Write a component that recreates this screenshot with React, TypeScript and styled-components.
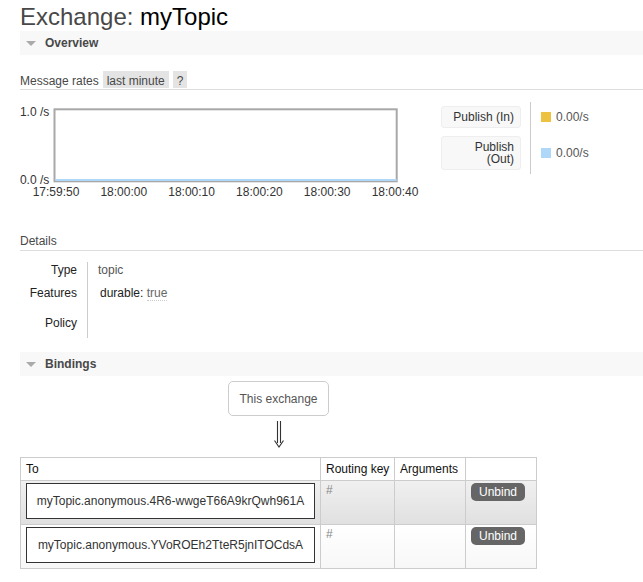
import React from 'react';
import styled, { createGlobalStyle } from 'styled-components';

const Global = createGlobalStyle`
  html, body { margin: 0; padding: 0; background: #fff; }
  body {
    font-family: "Liberation Sans", Arial, sans-serif;
    font-size: 12px;
    color: #484848;
    overflow: hidden;
  }
`;

const Main = styled.div`
  padding: 0 0 20px 20px;
`;

const Title = styled.h1`
  margin: 0;
  padding-top: 3px;
  height: 28px;
  line-height: 28px;
  font-size: 24px;
  font-weight: normal;
  color: #484848;
  white-space: nowrap;
  b { font-weight: normal; color: #000; }
`;

const SectionBar = styled.div<{ $mt: number }>`
  margin-top: ${p => p.$mt}px;
  height: 24px;
  background: #f8f8f8;
  display: flex;
  align-items: center;
  gap: 9px;
  padding-left: 6px;
  font-weight: bold;
  font-size: 12px;
  line-height: 14px;
  color: #484848;
`;

const Caret = styled.span`
  width: 0;
  height: 0;
  border-left: 5px solid transparent;
  border-right: 5px solid transparent;
  border-top: 5px solid #aaa;
`;

const SubHead = styled.div<{ $mt: number; $pb: number }>`
  margin-top: ${p => p.$mt}px;
  padding-bottom: ${p => p.$pb}px;
  font-size: 12px;
  line-height: 14px;
  color: #484848;
  border-bottom: 1px solid #ddd;
  white-space: nowrap;
`;

const Pill = styled.span<{ $ml: number }>`
  display: inline-block;
  margin-left: ${p => p.$ml}px;
  padding: 3px 4px 0;
  line-height: 14px;
  background: #e4e4e4;
  color: #484848;
`;

const ChartRow = styled.div`
  display: flex;
  align-items: flex-start;
  margin-top: 10px;
`;

const ChartSvg = styled.svg`
  display: block;
  margin-left: -5px;
  flex: none;
  font-family: "Liberation Sans", Arial, sans-serif;
  font-size: 12px;
`;

const Legend = styled.table`
  margin-left: 16px;
  margin-top: 2px;
  border-collapse: collapse;
  flex: none;
`;

const LegendTh = styled.th`
  padding: 4px 9px 4px 0;
  text-align: right;
  font-weight: normal;
  vertical-align: middle;
`;

const LegendLabel = styled.div`
  width: 66px;
  padding: 4px 6px;
  line-height: 12px;
  background: #f8f8f8;
  border: 1px solid #eee;
  border-radius: 3px;
  color: #333;
  text-align: right;
`;

const LegendTd = styled.td`
  border-left: 1px solid #ccc;
  padding: 0 0 0 10px;
  vertical-align: middle;
  color: #555;
  white-space: nowrap;
`;

const Swatch = styled.span<{ $c: string }>`
  display: inline-block;
  width: 10px;
  height: 10px;
  margin-right: 5px;
  vertical-align: -1px;
  background: ${p => p.$c};
`;

const Facts = styled.table`
  margin-top: 11px;
  border-collapse: collapse;
`;

const FactTh = styled.th<{ $pt: number; $pb: number }>`
  width: 57px;
  padding: ${p => p.$pt}px 10px ${p => p.$pb}px 0;
  text-align: right;
  font-weight: normal;
  color: #222;
  line-height: 14px;
  vertical-align: top;
  white-space: nowrap;
`;

const FactTd = styled.td<{ $pt: number; $pb: number }>`
  padding: ${p => p.$pt}px 0 ${p => p.$pb}px 10px;
  border-left: 1px solid #ccc;
  line-height: 14px;
  color: #555;
  vertical-align: top;
  white-space: nowrap;
`;

const FeatureKey = styled.span`
  color: #222;
  margin-left: 2px;
`;

const FeatureVal = styled.span`
  color: #666;
  border-bottom: 1px dotted #ccc;
`;

const BindingsWrap = styled.div`
  display: inline-block;
  margin-top: 5px;
  text-align: center;
`;

const ExchangeBox = styled.div`
  display: inline-block;
  padding: 10px 10px 9px;
  border: 1px solid #ccc;
  border-radius: 5px;
  line-height: 14px;
  color: #555;
`;

const ArrowSlot = styled.div`
  height: 41px;
  display: flex;
  justify-content: center;
  align-items: flex-start;
  padding-top: 5px;
  box-sizing: border-box;
`;

const BindTable = styled.table`
  border-collapse: collapse;
  table-layout: fixed;
  width: 517px;
  text-align: left;
`;

const HeadCell = styled.th`
  padding: 4px 5px;
  line-height: 14px;
  font-weight: normal;
  color: #111;
  border: 1px solid #ccc;
  background: #fff;
  white-space: nowrap;
`;

const BindRow = styled.tr<{ $alt: boolean }>`
  background: ${p =>
    p.$alt
      ? 'linear-gradient(#f0f0f0, #e0e0e0)'
      : 'linear-gradient(#ffffff, #f7f7f7)'};
`;

const Cell = styled.td<{ $muted?: boolean }>`
  padding: 2px 5px 5px;
  border: 1px solid #ccc;
  vertical-align: top;
  line-height: 14px;
  color: ${p => (p.$muted ? '#888' : '#333')};
`;

const QueueBox = styled.div`
  height: 34px;
  display: flex;
  align-items: center;
  justify-content: center;
  border: 1px solid #333;
  background: #fff;
  color: #333;
  white-space: nowrap;
`;

const UnbindButton = styled.button`
  display: inline-block;
  margin: 0;
  padding: 2px 8px;
  border: none;
  border-radius: 5px;
  background: #666;
  color: #fff;
  font-family: "Liberation Sans", Arial, sans-serif;
  font-size: 12px;
  font-weight: normal;
  line-height: 14px;
`;

const ticks = ['17:59:50', '18:00:00', '18:00:10', '18:00:20', '18:00:30', '18:00:40'];

const bindings = [
  'myTopic.anonymous.4R6-wwgeT66A9krQwh961A',
  'myTopic.anonymous.YVoROEh2TteR5jnITOCdsA',
];

function Chart() {
  return (
    <ChartSvg width={410} height={100} viewBox="0 0 410 100">
      <rect x={39.5} y={9.3} width={342.2} height={72} fill="#fff" stroke="#a8a8a8" strokeWidth={2} />
      <line x1={40.5} y1={80} x2={381.7} y2={80} stroke="#afd8f8" strokeWidth={2} />
      <text x={34.3} y={16} textAnchor="end" fill="#333">1.0 /s</text>
      <text x={34.3} y={84} textAnchor="end" fill="#333">0.0 /s</text>
      {ticks.map((t, i) => (
        <text key={t} x={41 + 67.8 * i} y={96} textAnchor="middle" fill="#333">
          {t}
        </text>
      ))}
    </ChartSvg>
  );
}

function DownArrow() {
  return (
    <svg width={12} height={27} viewBox="0 0 12 27" fill="none" stroke="#333" strokeWidth={1.1}>
      <path d="M4.5 0 V22 M7.5 0 V22 M1.5 19.5 L6 26 L10.5 19.5" />
    </svg>
  );
}

export default function App() {
  return (
    <>
      <Global />
      <Main>
        <Title>
          Exchange: <b>myTopic</b>
        </Title>

        <SectionBar $mt={0}>
          <Caret />
          Overview
        </SectionBar>

        <SubHead $mt={16} $pb={1}>
          Message rates<Pill $ml={4}>last minute</Pill>
          <Pill $ml={4}>?</Pill>
        </SubHead>

        <ChartRow>
          <Chart />
          <Legend>
            <tbody>
              <tr>
                <LegendTh>
                  <LegendLabel>Publish (In)</LegendLabel>
                </LegendTh>
                <LegendTd>
                  <Swatch $c="#edc240" />
                  0.00/s
                </LegendTd>
              </tr>
              <tr>
                <LegendTh>
                  <LegendLabel>Publish (Out)</LegendLabel>
                </LegendTh>
                <LegendTd>
                  <Swatch $c="#afd8f8" />
                  0.00/s
                </LegendTd>
              </tr>
            </tbody>
          </Legend>
        </ChartRow>

        <SubHead $mt={34} $pb={2}>
          Details
        </SubHead>

        <Facts>
          <tbody>
            <tr>
              <FactTh $pt={1} $pb={4}>Type</FactTh>
              <FactTd $pt={1} $pb={4}>topic</FactTd>
            </tr>
            <tr>
              <FactTh $pt={5} $pb={8}>Features</FactTh>
              <FactTd $pt={5} $pb={8}>
                <FeatureKey>durable:</FeatureKey> <FeatureVal>true</FeatureVal>
              </FactTd>
            </tr>
            <tr>
              <FactTh $pt={8} $pb={8}>Policy</FactTh>
              <FactTd $pt={8} $pb={8}></FactTd>
            </tr>
          </tbody>
        </Facts>

        <SectionBar $mt={14}>
          <Caret />
          Bindings
        </SectionBar>

        <BindingsWrap>
          <ExchangeBox>This exchange</ExchangeBox>
          <ArrowSlot>
            <DownArrow />
          </ArrowSlot>
          <BindTable>
            <colgroup>
              <col style={{ width: 300 }} />
              <col style={{ width: 74 }} />
              <col style={{ width: 71 }} />
              <col style={{ width: 71 }} />
            </colgroup>
            <thead>
              <tr>
                <HeadCell>To</HeadCell>
                <HeadCell>Routing key</HeadCell>
                <HeadCell>Arguments</HeadCell>
                <HeadCell></HeadCell>
              </tr>
            </thead>
            <tbody>
              {bindings.map((b, i) => (
                <BindRow key={b} $alt={i === 0}>
                  <Cell>
                    <QueueBox>{b}</QueueBox>
                  </Cell>
                  <Cell $muted>#</Cell>
                  <Cell></Cell>
                  <Cell>
                    <UnbindButton>Unbind</UnbindButton>
                  </Cell>
                </BindRow>
              ))}
            </tbody>
          </BindTable>
        </BindingsWrap>
      </Main>
    </>
  );
}
